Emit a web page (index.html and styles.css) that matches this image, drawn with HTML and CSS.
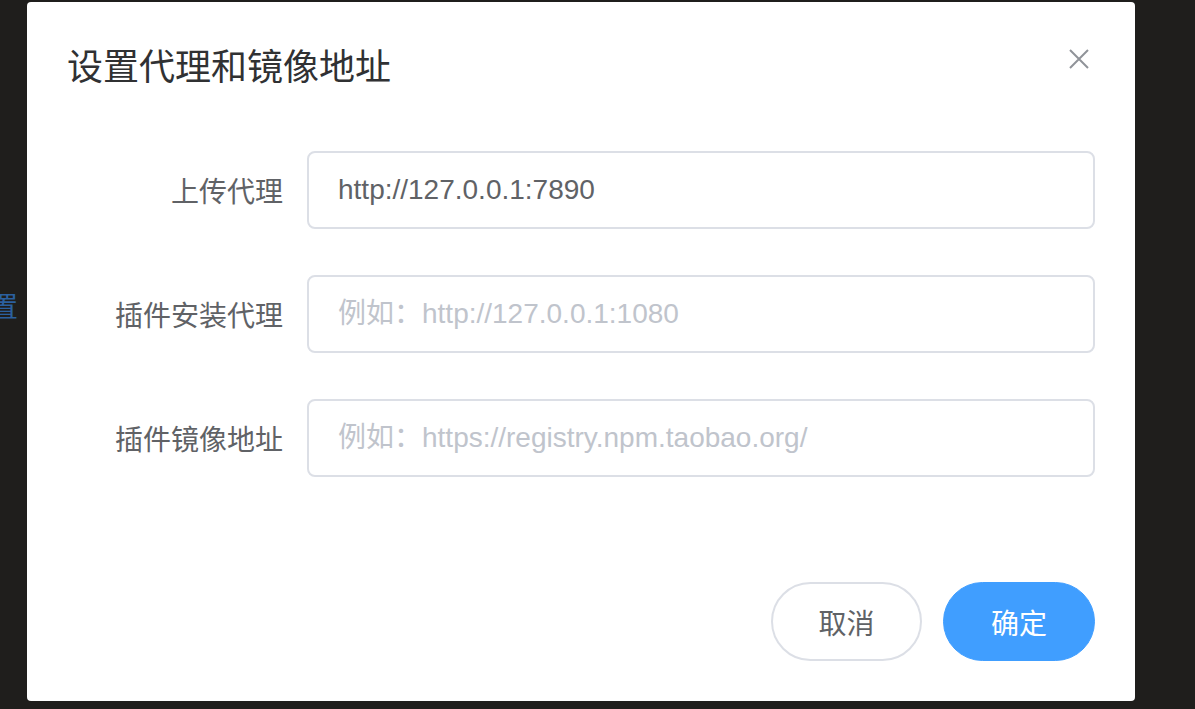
FILE: index.html
```html
<!DOCTYPE html>
<html lang="zh-CN">
<head>
<meta charset="utf-8">
<title>设置代理和镜像地址</title>
<link rel="stylesheet" href="styles.css">
</head>
<body>
<div class="page">
  <div class="bg-link">设置</div>
</div>
<div class="dialog" role="dialog">
  <div class="dialog-header">
    <span class="dialog-title">设置代理和镜像地址</span>
    <button class="dialog-close" aria-label="关闭">
      <svg width="20" height="20" viewBox="0 0 20 20"><path d="M1 1 L19 19 M19 1 L1 19" stroke="#909399" stroke-width="2" fill="none"/></svg>
    </button>
  </div>
  <div class="dialog-body">
    <div class="form-row">
      <label class="form-label">上传代理</label>
      <input class="form-input" type="text" value="http://127.0.0.1:7890">
    </div>
    <div class="form-row">
      <label class="form-label">插件安装代理</label>
      <input class="form-input" type="text" placeholder="例如：http://127.0.0.1:1080">
    </div>
    <div class="form-row">
      <label class="form-label">插件镜像地址</label>
      <input class="form-input" type="text" placeholder="例如：https://registry.npm.taobao.org/">
    </div>
  </div>
  <div class="dialog-footer">
    <button class="btn btn-cancel">取消</button>
    <button class="btn btn-primary">确定</button>
  </div>
</div>
</body>
</html>
```

FILE: styles.css
```css
html, body {
  margin: 0;
  padding: 0;
  height: 100%;
  overflow: hidden;
}

body {
  background: #1f1e1c;
  font-family: "Liberation Sans", "Noto Sans CJK SC", sans-serif;
}

.page {
  height: 100%;
  display: flex;
  align-items: flex-start;
}

.bg-link {
  margin-top: 287px;
  margin-left: -38px;
  font-size: 28px;
  line-height: 36px;
  color: #2b609f;
  font-family: "Noto Sans CJK SC", sans-serif;
}

.dialog {
  position: absolute;
  left: 27px;
  top: 2px;
  width: 1108px;
  background: #ffffff;
  border-radius: 4px;
  box-sizing: border-box;
}

.dialog-header {
  padding: 38px 40px 22px;
}

.dialog-title {
  display: block;
  font-size: 36px;
  line-height: 48px;
  color: #303133;
  font-family: "Noto Sans CJK SC", sans-serif;
}

.dialog-close {
  position: absolute;
  left: 1042px;
  top: 47px;
  width: 20px;
  height: 20px;
  padding: 0;
  border: 0;
  background: none;
  cursor: pointer;
}

.dialog-close svg {
  display: block;
}

.dialog-body {
  padding: 41px 40px 0;
  display: flex;
  flex-direction: column;
  gap: 46px;
}

.form-row {
  display: flex;
  align-items: center;
}

.form-label {
  width: 240px;
  box-sizing: border-box;
  padding-right: 24px;
  text-align: right;
  font-size: 28px;
  line-height: 78px;
  color: #606266;
  font-family: "Noto Sans CJK SC", sans-serif;
}

.form-input {
  flex: 1;
  height: 78px;
  box-sizing: border-box;
  border: 2px solid #dcdfe6;
  border-radius: 8px;
  padding: 0 29px;
  font-size: 28px;
  font-family: "Liberation Sans", "Noto Sans CJK SC", sans-serif;
  color: #606266;
  background: #fff;
  outline: none;
  margin: 0;
}

.form-input::placeholder {
  color: #c0c4cc;
  opacity: 1;
}

.dialog-footer {
  padding: 105px 40px 40px;
  display: flex;
  justify-content: flex-end;
  gap: 21px;
}

.btn {
  height: 79px;
  box-sizing: border-box;
  border-radius: 40px;
  font-size: 28px;
  font-family: "Noto Sans CJK SC", sans-serif;
  padding: 0;
  margin: 0;
  cursor: pointer;
}

.btn-cancel {
  width: 151px;
  border: 2px solid #dcdfe6;
  background: #fff;
  color: #606266;
}

.btn-primary {
  width: 152px;
  border: 1px solid #409eff;
  background: #409eff;
  color: #fff;
}
```
